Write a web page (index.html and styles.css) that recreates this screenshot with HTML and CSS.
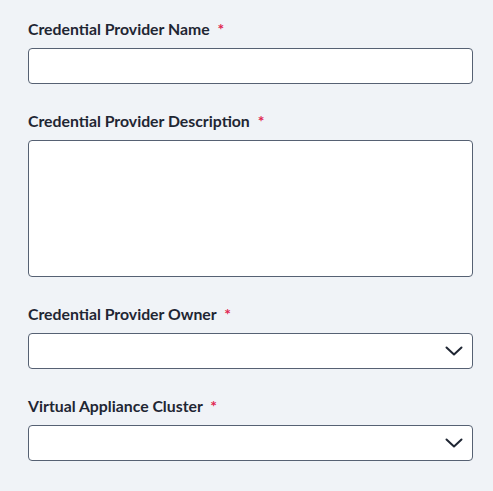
FILE: index.html
```html
<!DOCTYPE html>
<html>
<head>
<meta charset="utf-8">
<link rel="stylesheet" href="styles.css">
</head>
<body>
<form class="form">
  <div class="field">
    <label class="label">Credential Provider Name <span class="req">*</span></label>
    <div class="input"></div>
  </div>
  <div class="field">
    <label class="label">Credential Provider Description <span class="req">*</span></label>
    <div class="input textarea"></div>
  </div>
  <div class="field">
    <label class="label">Credential Provider Owner <span class="req">*</span></label>
    <div class="input select">
      <svg class="chev" width="18" height="10" viewBox="0 0 18 10"><path d="M1.5 1.5 L9 8.5 L16.5 1.5" fill="none" stroke="#1f2633" stroke-width="2" stroke-linecap="round" stroke-linejoin="round"/></svg>
    </div>
  </div>
  <div class="field">
    <label class="label">Virtual Appliance Cluster <span class="req">*</span></label>
    <div class="input select">
      <svg class="chev" width="18" height="10" viewBox="0 0 18 10"><path d="M1.5 1.5 L9 8.5 L16.5 1.5" fill="none" stroke="#1f2633" stroke-width="2" stroke-linecap="round" stroke-linejoin="round"/></svg>
    </div>
  </div>
</form>
</body>
</html>
```
FILE: styles.css
```css
html, body {
  margin: 0;
  padding: 0;
  background: #f0f3f7;
}
body {
  font-family: Lato, "Open Sans", sans-serif;
}
.form {
  padding: 19px 20px 0 28px;
  display: flex;
  flex-direction: column;
  gap: 27px;
}
.field {
  display: flex;
  flex-direction: column;
  gap: 9px;
}
.label {
  font-size: 15.8px;
  font-weight: 700;
  line-height: 20px;
  color: #1f2633;
}
.req {
  color: #e0244f;
  margin-left: 4px;
}
.input {
  box-sizing: border-box;
  height: 36px;
  background: #fff;
  border: 1px solid #566173;
  border-radius: 4px;
}
.textarea {
  height: 137px;
}
.select {
  display: flex;
  align-items: center;
  justify-content: flex-end;
  padding-right: 9px;
}
.chev {
  display: block;
}
```
